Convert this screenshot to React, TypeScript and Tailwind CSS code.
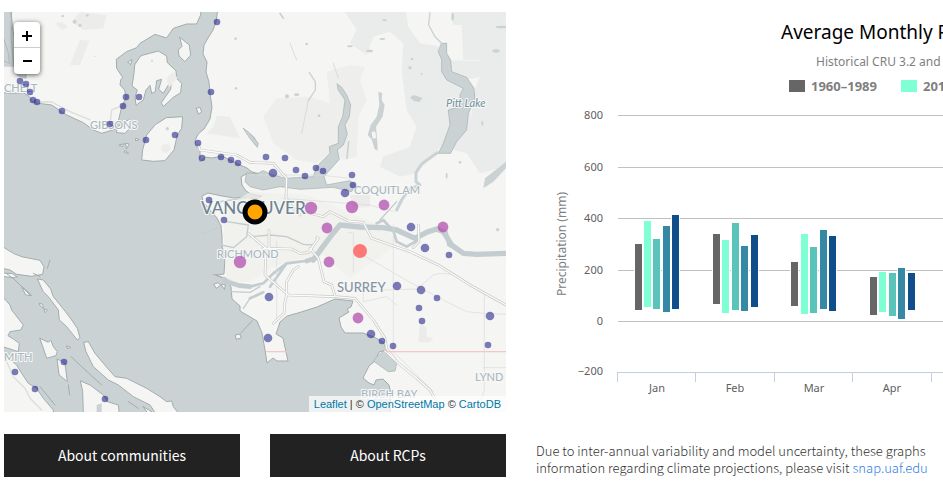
import React from "react";

const SMALL = "fill-[#26268c]/60";
const PURPLE = "fill-[#b14fae]/75";

const smallSites: [number, number, number][] = [
  [217, 22, 3], [211, 92, 3], [20, 81, 3], [26, 84, 3], [30, 92, 3], [33, 100, 3], [37, 102, 3],
  [62, 111, 3], [110, 124, 3], [123, 106, 3], [126, 97, 3], [139, 97, 3], [146, 140, 3],
  [175, 135, 3], [198, 143, 3], [202, 158, 3], [221, 157, 3], [231, 160, 3], [238, 163, 3],
  [266, 157, 3], [285, 158, 3], [273, 173, 4], [296, 170, 3], [305, 176, 3], [316, 168, 3],
  [323, 171, 3], [352, 175, 3], [353, 185, 3], [345, 193, 4], [209, 200, 3], [224, 220, 3],
  [411, 227, 4], [425, 248, 4], [449, 255, 3], [269, 297, 4], [268, 338, 4], [397, 286, 4],
  [421, 290, 4], [437, 298, 3], [419, 308, 3], [422, 321, 3], [490, 316, 4], [488, 345, 3],
  [371, 334, 4], [382, 341, 3], [393, 346, 3], [15, 372, 3], [35, 389, 3], [64, 362, 3], [105, 399, 3],
];

const mediumSites: [number, number][] = [
  [311, 208], [352, 207], [384, 205], [327, 228], [443, 227], [240, 262], [329, 262], [358, 318],
];

const places: [string, number, number, string][] = [
  ["CHELT", 4, 92, "fill-[#a9b7bf] text-[11px]"],
  ["GIBSONS", 90, 129, "fill-[#a9b7bf] text-[11px]"],
  ["COQUITLAM", 354, 194, "fill-[#a9b7bf] text-[11px]"],
  ["RICHMOND", 217, 258, "fill-[#a9b7bf] text-[11px]"],
  ["SURREY", 337, 292, "fill-[#8395a1] text-[13px]"],
  ["MITH", 4, 361, "fill-[#a9b7bf] text-[11px]"],
  ["LYND", 475, 381, "fill-[#a9b7bf] text-[11px]"],
  ["BIRCH BAY", 361, 398, "fill-[#a9b7bf] text-[11px]"],
  ["VANCOUVER", 201, 214, "fill-[#6f8492] text-[17px]"],
];

const land = "fill-[#f5f5f3] stroke-[#a3adad] stroke-3";
const water = "fill-[#cbd2d4] stroke-[#a3adad] stroke-2";

function Terrain() {
  return (
    <g strokeLinejoin="round" strokeLinecap="round">
      <rect x="4" y="12" width="502" height="400" fill="#cbd2d4" />
      <path
        className="fill-[#f5f5f3] stroke-[#a3adad] stroke-1"
        d="M218 8 L216 22 213 30 208 38 204 45 203 54 207 62 206 72 209 82 210 94 212 107 210 119 204 129 198 134 195 141 196 146 200 149 200 162 205 157 212 158 222 156 232 161 240 165 247 168 252 172 256 173 262 174 262 184 258 186 256 181 250 178 246 174 241 177 242 185 246 191 251 194 262 196 256 199 245 197 234 198 222 196 208 193 202 196 203 202 211 211 217 218 221 226 222 236 222 246 225 258 224 274 216 275 226 279 231 287 232 299 240 306 240 311 252 318 257 321 262 333 265 350 267 363 273 358 277 361 288 361 283 338 276 334 280 322 287 316 298 313 317 307 335 299 353 301 351 307 347 309 349 312 339 318 341 327 345 333 363 333 374 337 383 342 387 350 379 352 375 361 369 366 363 378 369 383 374 385 376 380 383 379 389 385 391 394 390 416 512 416 512 8 Z"
      />
      <g transform="translate(250 0) scale(.3333)">
        <path fill="#eaecec" d="M285 36 L468 36 475 80 510 130 565 138 570 180 640 182 690 182 695 230 640 240 690 470 660 450 570 440 500 520 450 530 390 500 400 470 480 440 500 380 470 330 455 210 460 130 420 95 370 110 350 165 300 130 320 90 Z" />
        <path fill="#eaecec" d="M605 36 L768 36 768 500 690 520 650 460 610 450 660 400 670 280 690 230 690 180 640 180 635 75 610 75 Z" />
        <path fill="#eeeeec" d="M300 195 L345 200 330 240 350 300 325 350 320 470 280 480 250 450 200 490 140 480 70 430 40 350 80 295 180 290 240 310 230 215 Z" />
        <path className={water} d="M262 252 L275 262 290 285 302 315 298 350 285 375 292 402 280 435 262 450 268 478 235 515 222 530 230 555 300 542 316 555 305 575 250 562 150 568 90 560 40 570 0 560 -15 545 -10 518 20 522 40 512 60 522 105 535 190 530 200 500 240 460 238 440 265 430 265 380 278 350 285 300 265 270 Z" />
        <path className={water} d="M575 130 L590 130 590 160 602 180 605 215 650 232 672 265 675 300 655 340 650 390 620 425 602 460 565 460 580 430 600 375 595 330 630 320 630 285 640 265 590 240 575 215 575 180 565 155 Z" />
        <path fill="#cbd2d4" d="M385 275 L397 280 395 300 404 315 398 350 378 380 382 425 383 452 374 448 365 418 353 405 362 375 380 350 388 315 Z M480 292 l12 -7 26 9 -10 12 -17 -3Z M768 485 L768 505 730 545 700 565 705 535Z M0 400 l15 12 10 25 -12 -3Z" />
        <path d="M364 395 l12 -2 4 22 -12 2Z" fill="#f5f5f3" stroke="#b9c2c4" />
        <g fill="none" stroke="#cbd2d4">
          <path strokeWidth="4" d="M540 38 L536 75 555 110 575 130 M178 218 L196 245 196 270 175 302" />
          <path strokeWidth="9" d="M562 458 L515 492 498 518 498 545 510 555 475 570 455 600 440 630" />
          <path strokeWidth="5" d="M296 425 l-5 50 M90 40 l10 15 M15 590 L-90 605" />
          <path strokeWidth="2" d="M250 190 l15 45 M120 130 l20 50 M175 302 L155 400" />
        </g>
        <g fill="#cbd2d4">
          <circle cx="111" cy="289" r="6" /><ellipse cx="140" cy="284" rx="8" ry="4" /><circle cx="207" cy="347" r="4" />
          <ellipse cx="359" cy="153" rx="10" ry="4" /><ellipse cx="397" cy="117" rx="9" ry="3" /><ellipse cx="404" cy="61" rx="7" ry="3" />
          <ellipse cx="300" cy="139" rx="9" ry="3" /><circle cx="486" cy="177" r="4" /><circle cx="480" cy="203" r="5" />
          <circle cx="515" cy="222" r="3" /><ellipse cx="738" cy="153" rx="11" ry="5" /><ellipse cx="756" cy="81" rx="19" ry="4" />
          <ellipse cx="697" cy="370" rx="3" ry="8" /><ellipse cx="590" cy="527" rx="3" ry="9" /><circle cx="630" cy="487" r="4" />
          <ellipse cx="608" cy="50" rx="4" ry="12" /><circle cx="170" cy="132" r="4" />
        </g>
      </g>
      <g transform="scale(.3333)">
        <path className={land} d="M8 30 L33 30 L38 100 48 200 75 222 78 252 40 246 8 205 8 278 40 280 70 278 88 290 100 308 155 315 200 345 250 368 280 390 305 400 345 388 356 360 364 325 378 292 374 270 360 255 362 240 368 232 350 205 349 178 380 155 410 143 420 130 465 103 500 114 520 85 560 72 590 72 602 45 603 30 Z" />
        <path fill="#f5f5f3" d="M8 200 L48 200 90 240 70 276 8 276Z" />
        <path className={water} d="M33 30 L38 90 46 120 78 200 78 235 52 226 42 200 34 120Z M10 110 L25 160 28 190 10 182Z" />
        <g fill="#ececea">
          <path d="M240 120 L268 122 240 195 210 195Z M240 36 L320 45 310 85 250 90 215 65Z M650 348 L690 350 720 415 620 400 640 380Z M165 70 l20 -5 20 15 -20 10Z" />
        </g>
        <path fill="none" stroke="#dcdcda" strokeWidth="4" d="M110 306 L155 306 210 335 270 360 M330 372 L335 330 365 318" />
        <path className={land} d="M430 165 L475 153 500 168 502 188 528 212 530 235 545 250 542 278 520 292 490 320 484 308 512 268 514 240 490 280 476 268 485 238 470 242 466 275 455 280 450 256 438 270 430 300 408 316 405 290 412 270 396 258 402 220 404 195 420 170 Z" />
        <path className={land} d="M540 112 L552 122 568 135 572 165 555 185 537 168 535 150 545 140 Z" />
        <path className={land} d="M500 353 L548 350 545 385 532 405 522 450 495 482 460 484 425 480 428 450 440 405 465 375 Z" />
        <path className={land} d="M355 378 L385 360 412 372 390 384 375 400 350 398Z M590 325 l10 -3 5 14 -9 6Z M384 186 l12 -8 -4 15Z" />
        <path fill="#cbd2d4" stroke="#a3adad" strokeWidth="2" d="M730 385 L748 398 775 430 772 442 750 415Z" />
        <path d="M485 435 l20 -5 8 18 -15 12 -15 -8Z M500 235 l20 -20 12 18 -25 30Z" fill="#ececea" />
        <path d="M358 435 l15 -4 -5 8Z M378 430 l10 2 -8 14Z M376 452 l10 8 -12 -2Z M408 415 l10 4 -10 3Z" className={land} />
        <g fill="#cdd3d5">
          <circle cx="188" cy="48" r="4" /><circle cx="224" cy="65" r="6" /><circle cx="240" cy="76" r="5" /><circle cx="262" cy="46" r="4" />
          <circle cx="284" cy="169" r="2" /><circle cx="456" cy="182" r="3" /><circle cx="502" cy="386" r="5" /><circle cx="708" cy="265" r="4" /><circle cx="707" cy="116" r="4" />
        </g>
      </g>
      <g transform="translate(0 205) scale(.3333)">
        <path className={land} d="M8 125 L40 145 65 155 120 166 132 185 128 208 95 214 50 208 30 195 8 190Z" />
        <path className={land} d="M8 204 L38 206 52 216 35 218 8 214Z M65 244 L90 266 95 272 78 270Z M118 295 l10 3 2 12 -8 -6Z M132 312 l10 3 -6 7Z" />
        <path className={land} d="M113 222 L130 225 152 252 160 275 195 318 215 345 232 370 240 398 232 405 200 365 178 345 175 315 145 275 130 260Z" />
        <path className={land} d="M252 412 L265 410 285 445 310 475 345 515 380 520 440 550 480 575 500 590 515 588 520 605 540 630 470 630 450 600 400 575 355 540 325 525 280 485 258 440Z" />
        <path className={land} d="M8 275 L30 300 35 315 70 360 62 375 30 380 24 392 40 402 58 415 55 440 8 425Z" />
        <path className={land} d="M8 445 L50 480 65 505 85 535 110 550 130 580 160 615 160 630 8 630Z" />
        <path className={land} d="M120 400 L145 412 152 405 160 425 172 440 168 452 140 460 130 430Z M172 462 L195 475 202 530 190 520 178 510Z" />
        <path className={land} d="M242 528 L270 540 310 570 322 590 355 600 358 625 250 625 248 560Z M430 605 l25 15 -10 5Z" />
        <path className={land} d="M642 238 l12 -5 8 8 -12 8Z M664 238 l12 0 -2 15Z M707 390 l12 -3 5 12 -14 4Z M200 423 l12 4 -8 4Z" />
        <path d="M290 600 l15 -5 0 30 -15 0Z" fill="#cbd2d4" />
        <g fill="none" stroke="#a3adad" strokeWidth="3">
          <path d="M213 455 L245 485 305 540 M20 206 L45 225 90 270 M722 385 L757 347 M640 208 L690 225 M150 165 l-8 25 M100 205 l20 10 M120 545 l45 55 M385 590 l30 20 M205 540 l4 30" />
          <path stroke="#c3c9cb" strokeWidth="2" d="M605 86 L665 65 M630 30 L665 62" />
        </g>
        <path d="M12 452 L40 515 75 550 90 580 125 615" fill="none" stroke="#dcdcda" strokeWidth="4" />
      </g>
      <g transform="translate(250 205) scale(.3333)">
        <path fill="#efefeb" d="M0 -40 L170 -30 340 40 420 80 440 120 340 190 300 220 220 150 110 170 60 190 0 230 -70 230 -78 100 -80 10Z" opacity=".7" />
        <path fill="#ebecea" d="M510 350 l20 20 0 25 20 5 -10 12 -35 0Z M300 -30 l60 0 0 35 -50 5Z" />
        <g fill="none" stroke="#c3cccf">
          <path strokeWidth="16" d="M190 165 L215 130 245 90 270 60 330 66 400 68 440 75 495 100 530 82 560 72 580 80 605 120 640 145 680 148 768 145" />
          <path strokeWidth="8" d="M380 55 L400 45 430 78 440 110 470 125 505 105 M190 165 L110 175 70 205 40 235 0 245 M590 80 L595 120 640 142 M110 175 L60 245 M0 280 L40 262" />
          <path strokeWidth="14" d="M0 245 L-30 242 -70 230 -78 222 M195 160 L170 168" />
          <path strokeWidth="4" d="M0 95 L60 90 110 95 160 118 190 120 M440 -10 L390 45 M-85 120 L-50 128 -10 95 -5 60 -70 50 M-60 260 L0 262 30 245 M-20 310 L0 280" />
        </g>
        <g fill="none" stroke="#d9dbda" strokeWidth="2">
          <path d="M310 200 L310 85 295 82 M330 145 L480 232 580 285 650 320 700 325 768 328 M430 60 L430 435 M400 255 L500 252 515 240 550 210 570 205 600 208 M703 265 L703 555 680 620 M430 440 L550 560 M700 488 L768 488 M0 -90 L210 -90 300 -80 M100 -20 L360 0 430 20 M80 110 L80 350 M340 240 L340 290 410 275 440 300" />
        </g>
        <g fill="none" stroke="#c8c8c6" strokeWidth="8">
          <path d="M-5 85 L48 130 45 210 115 270 255 275 315 280 370 345 405 400 410 430 440 470 500 520 540 555 560 590 M40 130 L125 132 150 145 175 143 205 100 200 98 M180 130 L205 160 222 230 245 240 255 272 M110 270 L105 290 102 325 80 345 70 355 M110 270 L110 230 130 195 145 185 M57 75 L57 130 M170 22 L220 35 240 20 295 48 340 52 365 100 480 140 565 180 660 240 768 300 M505 60 L507 110 490 128" />
          <path d="M0 -128 L70 -125 110 -80 108 -20 130 10 150 30 M0 -128 L-40 -150 -150 -165 -155 -180" />
        </g>
        <g fill="none" stroke="#fcfcfb" strokeWidth="4">
          <path d="M-5 85 L48 130 45 210 115 270 255 275 315 280 370 345 405 400 410 430 440 470 500 520 540 555 560 590 M40 130 L125 132 150 145 175 143 205 100 200 98 M180 130 L205 160 222 230 245 240 255 272 M110 270 L105 290 102 325 80 345 70 355 M110 270 L110 230 130 195 145 185 M57 75 L57 130 M170 22 L220 35 240 20 295 48 340 52 365 100 480 140 565 180 660 240 768 300 M505 60 L507 110 490 128" />
          <path d="M0 -128 L70 -125 110 -80 108 -20 130 10 150 30 M0 -128 L-40 -150 -150 -165 -155 -180" />
        </g>
        <path className={water} d="M405 437 L415 450 440 475 435 498 415 500 370 468 380 455Z" />
        <path d="M405 437 L440 470 500 520" fill="none" stroke="#f8f8f6" strokeWidth="4" />
        <path d="M50 440 L110 440 M410 440 L768 440" stroke="#f4c6c6" strokeWidth="4" />
        <circle cx="743" cy="74" r="5" fill="#cbd2d4" />
      </g>
    </g>
  );
}

function CommunityMap() {
  return (
    <div className="relative h-[400px] overflow-hidden bg-[#cbd2d4]">
      <svg
        viewBox="4 12 502 400"
        preserveAspectRatio="xMidYMid slice"
        className="block h-full w-full"
        role="img"
        aria-label="Map of communities around Vancouver"
      >
        <Terrain />
        <g className="font-['Lato',sans-serif] font-medium" stroke="#f8f8f7" strokeWidth="2" strokeLinejoin="round" paintOrder="stroke">
          {places.map(([name, x, y, look]) => (
            <text key={name} x={x} y={y} className={look}>{name}</text>
          ))}
          <text x="446" y="107" className="fill-[#7795a3] text-[11px] italic">Pitt Lake</text>
        </g>
        {smallSites.map(([x, y, r]) => (
          <circle key={`${x}-${y}`} cx={x} cy={y} r={r + 0.3} className={SMALL} />
        ))}
        {mediumSites.map(([x, y]) => (
          <circle key={`${x}-${y}`} cx={x} cy={y} r={x === 311 || x === 352 || x === 240 ? 6.2 : 5.4} className={PURPLE} />
        ))}
        <circle cx="360" cy="251" r="7" className="fill-[#ff5050]/75" />
        <circle cx="255" cy="212" r="10" fill="#ffa500" stroke="#000" strokeWidth="5" />
      </svg>
      <div className="absolute top-[10px] left-[10px] flex w-[26px] flex-col overflow-hidden rounded bg-white text-black shadow-[0_1px_5px_rgba(0,0,0,0.65)]">
        <button type="button" aria-label="Zoom in" className="flex h-[26px] items-center justify-center border-b border-[#ccc]">
          <svg viewBox="0 0 12 12" className="size-3" stroke="currentColor" strokeWidth="2"><path d="M1 7h10M6 2v10" /></svg>
        </button>
        <button type="button" aria-label="Zoom out" className="flex h-[26px] items-center justify-center">
          <svg viewBox="0 0 12 12" className="size-3" stroke="currentColor" strokeWidth="2"><path d="M2 6h9" /></svg>
        </button>
      </div>
      <div className="absolute right-0 bottom-0 bg-white/70 px-[5px] font-['Liberation_Sans',sans-serif] text-[11px] leading-4 text-[#333]">
        <a href="#leaflet" className="text-[#0078a8]">Leaflet</a> | © <a href="#osm" className="text-[#0078a8]">OpenStreetMap</a> © <a href="#cartodb" className="text-[#0078a8]">CartoDB</a>
      </div>
    </div>
  );
}

const seriesFill = ["fill-[#666666]", "fill-[#7fffd4]", "fill-[#5ac3ba]", "fill-[#3589a5]", "fill-[#104e8b]"];

const months: { name: string; center: number; bars: [number, number, number][] }[] = [
  { name: "Jan", center: 657, bars: [[635, 244, 310], [644, 221, 307], [653, 239, 309], [663, 226, 312], [672, 215, 309]] },
  { name: "Feb", center: 735, bars: [[713, 234, 304], [722, 240, 313], [732, 223, 310], [741, 246, 311], [751, 235, 307]] },
  { name: "Mar", center: 814, bars: [[791, 262, 306], [801, 234, 314], [810, 247, 313], [820, 230, 309], [829, 236, 311]] },
  { name: "Apr", center: 892, bars: [[870, 277, 315], [879, 272, 312], [889, 273, 316], [898, 268, 319], [908, 273, 310]] },
];

const gridLines: [string, number][] = [["800", 115], ["600", 167], ["400", 218], ["200", 270], ["0", 321]];

function PrecipitationChart() {
  return (
    <figure className="font-['Noto_Sans',sans-serif] whitespace-nowrap">
      <h2 className="pt-2 pl-[245px] text-[19px] leading-6 text-black">Average Monthly P</h2>
      <p className="pt-2 pl-[280px] text-xs leading-5 text-[#808080]">Historical CRU 3.2 and</p>
      <ul className="flex gap-6 pt-1 pl-[253px] text-[13px] leading-5 font-bold text-[#808080]">
        <li className="flex items-center gap-1.5"><span className="h-3 w-4 bg-[#666666]" />1960–1989</li>
        <li className="flex items-center gap-1.5"><span className="h-3 w-4 bg-[#7fffd4]" />201</li>
      </ul>
      <svg className="block h-[304px] w-full text-[11px]" role="img" aria-label="Monthly precipitation ranges">
        <g transform="translate(-536 -96)" shapeRendering="crispEdges">
          {gridLines.map(([label, y]) => (
            <rect key={label} x="618" y={y} width="2000" height="1" fill="#c0c0c0" />
          ))}
          <path d="M617.5 382V372.5H2600M695.5 372v10M774.5 372v10M852.5 372v10M931.5 372v10" fill="none" stroke="#c0d0e0" />
          {months.map((m) =>
            m.bars.map(([x, top, bottom], i) => (
              <g key={`${m.name}-${i}`}>
                <rect x={x - 1} y={top - 1} width="9" height={bottom - top + 2} fill="#fff" />
                <rect x={x} y={top} width="7" height={bottom - top} className={seriesFill[i]} />
              </g>
            )),
          )}
        </g>
        <g transform="translate(-536 -96)" fill="#606060">
          {gridLines.map(([label, y]) => (
            <text key={label} x="603" y={y + 4} textAnchor="end">{label}</text>
          ))}
          <text x="603" y="375" textAnchor="end">−200</text>
          {months.map((m) => (
            <text key={m.name} x={m.center} y="392" textAnchor="middle">{m.name}</text>
          ))}
          <text transform="translate(566 244) rotate(-90)" textAnchor="middle" className="fill-[#808080] text-xs">Precipitation (mm)</text>
        </g>
      </svg>
    </figure>
  );
}

export default function App() {
  return (
    <main className="flex gap-[30px] overflow-hidden bg-white pt-3 pb-2 pl-1">
      <section className="flex w-[502px] shrink-0 flex-col gap-[22px]">
        <CommunityMap />
        <div className="grid grid-cols-2 gap-[30px] font-['Noto_Sans_CJK_SC',sans-serif] text-[14px] text-white">
          <button type="button" className="h-[43px] bg-[#222]">About communities</button>
          <button type="button" className="h-[43px] bg-[#222]">About RCPs</button>
        </div>
      </section>
      <section className="min-w-0 flex-1 overflow-hidden">
        <PrecipitationChart />
        <p className="pt-[42px] font-['Noto_Sans_CJK_SC',sans-serif] text-[13px] leading-[17px] font-light whitespace-nowrap text-[#333]">
          Due to inter-annual variability and model uncertainty, these graphs
          <br />
          information regarding climate projections, please visit <a href="#snap" className="text-[#337fe5]">snap.uaf.edu</a>
        </p>
      </section>
    </main>
  );
}
